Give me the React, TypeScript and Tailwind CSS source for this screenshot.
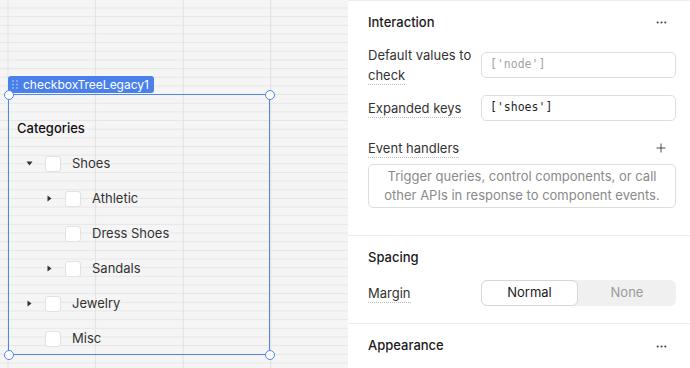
import React from "react";
import { Ellipsis, Plus } from "lucide-react";

type Node = { label: string; level: number; caret?: "down" | "right" };

const nodes: Node[] = [
  { label: "Shoes", level: 0, caret: "down" },
  { label: "Athletic", level: 1, caret: "right" },
  { label: "Dress Shoes", level: 1 },
  { label: "Sandals", level: 1, caret: "right" },
  { label: "Jewelry", level: 0, caret: "right" },
  { label: "Misc", level: 0 },
];

function Caret({ dir }: { dir?: "down" | "right" }) {
  if (!dir) return null;
  if (dir === "down")
    return (
      <svg width="7" height="5" viewBox="0 0 7 5">
        <path d="M0.5 0.5 L6.5 0.5 L3.5 4.5 Z" fill="#333" />
      </svg>
    );
  return (
    <svg width="5" height="7" viewBox="0 0 5 7">
      <path d="M0.5 0.5 L4.5 3.5 L0.5 6.5 Z" fill="#333" />
    </svg>
  );
}

function Handle({ cls }: { cls: string }) {
  return (
    <div
      className={`absolute w-[10px] h-[10px] rounded-full bg-white border border-[#4f86ec] ${cls}`}
    />
  );
}

function Label({ children }: { children: React.ReactNode }) {
  return (
    <span className="border-b border-dotted border-[#bdbdbd] pb-[1px]">{children}</span>
  );
}

export default function App() {
  return (
    <div className="w-[690px] h-[368px] flex overflow-hidden font-['Inter',sans-serif] text-[13px]">
      {/* Canvas */}
      <div className="relative w-[348px] h-full bg-[#f5f5f5] bg-[linear-gradient(to_right,#e2e2e2_1px,transparent_1px),linear-gradient(to_bottom,#e6e6e6_1px,transparent_1px)] bg-[size:87.6px_100%,100%_8.67px] bg-[position:7.5px_0px,0px_7.5px]">
        {/* component label */}
        <div className="absolute left-[8px] top-[76px] h-[17px] rounded-[3px] bg-[#4a80ea] flex items-center pl-[4px] pr-[5px] gap-[5px] text-white text-[12px] leading-none">
          <svg width="6" height="9" viewBox="0 0 6 9">
            <g fill="#c9d9fa">
              <circle cx="1" cy="1" r="0.8" />
              <circle cx="5" cy="1" r="0.8" />
              <circle cx="1" cy="4.5" r="0.8" />
              <circle cx="5" cy="4.5" r="0.8" />
              <circle cx="1" cy="8" r="0.8" />
              <circle cx="5" cy="8" r="0.8" />
            </g>
          </svg>
          <span>checkboxTreeLegacy1</span>
        </div>
        {/* selected component */}
        <div className="absolute left-[8px] top-[94px] w-[262px] h-[261px] border border-[#4f86ec]">
          <div className="pl-[8px] pt-[16px]">
            <div className="h-[35px] flex items-center text-[13px] font-medium text-[#111]">
              Categories
            </div>
            {nodes.map((n) => (
              <div
                key={n.label}
                className="h-[35px] flex items-center"
                style={{ paddingLeft: n.level * 20 }}
              >
                <div className="w-[25px] flex justify-center items-center">
                  <Caret dir={n.caret} />
                </div>
                <div className="ml-[3px] w-[16px] h-[16px] rounded-[3px] bg-white border border-[#e2e2e2]" />
                <span className="ml-[11px] text-[#333]">{n.label}</span>
              </div>
            ))}
          </div>
          <Handle cls="-left-[5.5px] -top-[5.5px]" />
          <Handle cls="-right-[5.5px] -top-[5.5px]" />
          <Handle cls="-left-[5.5px] -bottom-[5.5px]" />
          <Handle cls="-right-[5.5px] -bottom-[5.5px]" />
        </div>
      </div>

      {/* Inspector panel */}
      <div className="flex-1 h-full bg-white border-t border-[#ececec] text-[#1f1f1f]">
        {/* Interaction */}
        <div className="pl-[20px] pr-[14px] border-b border-[#ececec] pb-[27px]">
          <div className="h-[43px] flex items-center justify-between">
            <span className="font-medium text-[#1a1a1a]">Interaction</span>
            <Ellipsis size={13} strokeWidth={2} className="mr-[8px] text-[#444]" />
          </div>
          <div className="flex items-center h-[41px]">
            <div className="w-[113px] leading-[20px] text-[#333]">
              <div>Default values to</div>
              <div>
                <Label>check</Label>
              </div>
            </div>
            <div className="flex-1 h-[26px] rounded-[5px] border border-[#dedede] flex items-center pl-[8px] font-['DejaVu_Sans_Mono',monospace] text-[11.5px] text-[#a3a3a3]">
              ['node']
            </div>
          </div>
          <div className="flex items-center mt-[10px] h-[26px]">
            <div className="w-[113px] text-[#333] leading-[20px]">
              <Label>Expanded keys</Label>
            </div>
            <div className="flex-1 h-[26px] rounded-[5px] border border-[#dedede] flex items-center pl-[8px] font-['DejaVu_Sans_Mono',monospace] text-[11.5px] text-[#1f1f1f]">
              ['shoes']
            </div>
          </div>
          <div className="mt-[17px] h-[20px] flex items-center justify-between">
            <span className="text-[#333] leading-[20px]">
              <Label>Event handlers</Label>
            </span>
            <Plus size={14} strokeWidth={1.5} className="mr-[8px] text-[#333]" />
          </div>
          <div className="mt-[6px] h-[44px] rounded-[5px] border border-[#dedede] flex flex-col items-center justify-center text-[#8a8a8a] leading-[19px]">
            <div>Trigger queries, control components, or call</div>
            <div>other APIs in response to component events.</div>
          </div>
        </div>

        {/* Spacing */}
        <div className="pl-[20px] pr-[14px] border-b border-[#ececec] pb-[17px]">
          <div className="h-[44px] flex items-center">
            <span className="font-medium text-[#1a1a1a]">Spacing</span>
          </div>
          <div className="flex items-center h-[26px]">
            <div className="w-[113px] text-[#333] leading-[20px]">
              <Label>Margin</Label>
            </div>
            <div className="flex-1 h-[26px] rounded-[6px] bg-[#f0f0f0] flex">
              <div className="w-[97px] h-full rounded-[6px] bg-white border border-[#d6d6d6] flex items-center justify-center text-[#1a1a1a]">
                Normal
              </div>
              <div className="flex-1 flex items-center justify-center text-[#9a9a9a]">None</div>
            </div>
          </div>
        </div>

        {/* Appearance */}
        <div className="pl-[20px] pr-[14px]">
          <div className="h-[44px] flex items-center justify-between">
            <span className="font-medium text-[#1a1a1a]">Appearance</span>
            <Ellipsis size={13} strokeWidth={2} className="mr-[8px] text-[#444]" />
          </div>
          <div className="ml-[113px] h-[26px] rounded-[5px] border border-[#dedede]" />
        </div>
      </div>
    </div>
  );
}
